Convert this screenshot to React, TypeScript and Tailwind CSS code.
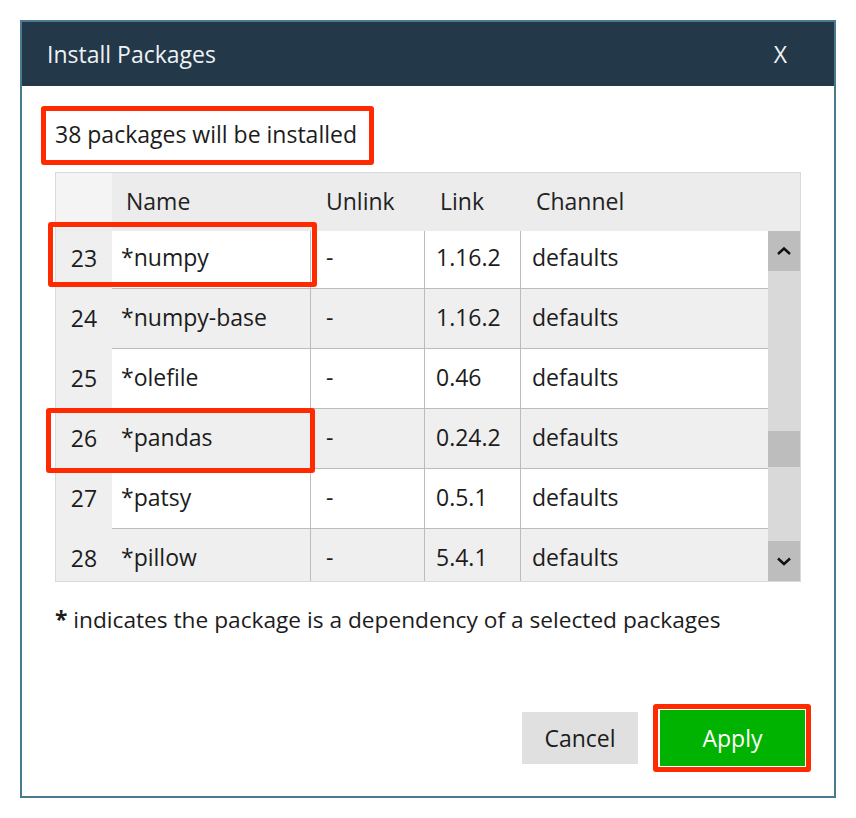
import React from 'react';

interface Pkg {
  num: number;
  name: string;
  unlink: string;
  link: string;
  channel: string;
}

const packages: Pkg[] = [
  { num: 23, name: '*numpy', unlink: '-', link: '1.16.2', channel: 'defaults' },
  { num: 24, name: '*numpy-base', unlink: '-', link: '1.16.2', channel: 'defaults' },
  { num: 25, name: '*olefile', unlink: '-', link: '0.46', channel: 'defaults' },
  { num: 26, name: '*pandas', unlink: '-', link: '0.24.2', channel: 'defaults' },
  { num: 27, name: '*patsy', unlink: '-', link: '0.5.1', channel: 'defaults' },
  { num: 28, name: '*pillow', unlink: '-', link: '5.4.1', channel: 'defaults' },
];

function Chevron({ up }: { up: boolean }) {
  return (
    <svg width="16" height="10" viewBox="0 0 16 10">
      <polyline
        points={up ? '2,8 8,2.5 14,8' : '2,2.5 8,8 14,2.5'}
        fill="none"
        stroke="#111"
        strokeWidth="2.4"
      />
    </svg>
  );
}

export default function App() {
  return (
    <div
      className="relative w-[856px] h-[818px] bg-white pl-[20px] pt-[20px] text-[#1c1c1c]"
      style={{ fontFamily: '"Open Sans", "Noto Sans", sans-serif' }}
    >
      <div className="w-[816px] h-[778px] border-2 border-[#4a7b8c] flex flex-col">
        {/* Title bar */}
        <div className="h-[64px] bg-[#233849] flex items-center justify-between pl-[25px] pr-[47px] text-[#eef2f5] text-[23px]">
          <span>Install Packages</span>
          <span>X</span>
        </div>

        <div className="flex-1 flex flex-col px-[33px]">
          <div className="pt-[30px] h-[86px] text-[23px] leading-[36px]">38 packages will be installed</div>

          {/* Table */}
          <div className="w-[746px] h-[410px] border border-[#d9d9d9] flex flex-col">
            <div className="h-[58px] flex text-[23px] text-[#222] bg-[#ececec] pb-[2px]">
              <div className="w-[56px] bg-[#f4f4f4]" />
              <div className="w-[198px] pl-[14px] flex items-center">Name</div>
              <div className="w-[114px] pl-[16px] flex items-center">Unlink</div>
              <div className="w-[96px] pl-[16px] flex items-center">Link</div>
              <div className="w-[248px] pl-[16px] flex items-center">Channel</div>
            </div>

            <div className="flex-1 flex overflow-hidden">
              <div className="w-[712px] overflow-hidden">
                <div className="-mt-[2px]">
                  {packages.map((p, i) => {
                    const bg = i % 2 === 0 ? 'bg-white' : 'bg-[#efefef]';
                    return (
                      <div key={p.num} className="h-[60px] flex text-[23px]">
                        <div className="w-[56px] bg-[#efefef] flex items-center justify-center pb-[2px]">{p.num}</div>
                        <div className={`w-[198px] ${bg} border-b border-[#bcbcbc] pl-[9px] pb-[2px] flex items-center`}>{p.name}</div>
                        <div className={`w-[114px] ${bg} border-b border-l border-[#bcbcbc] pl-[15px] pb-[2px] flex items-center`}>{p.unlink}</div>
                        <div className={`w-[96px] ${bg} border-b border-l border-[#bcbcbc] pl-[11px] pb-[2px] flex items-center`}>{p.link}</div>
                        <div className={`w-[248px] ${bg} border-b border-l border-[#bcbcbc] pl-[11px] pb-[2px] flex items-center`}>{p.channel}</div>
                      </div>
                    );
                  })}
                </div>
              </div>

              {/* Scrollbar */}
              <div className="w-[32px] bg-[#d9d9d9] flex flex-col">
                <div className="h-[40px] bg-[#bdbdbd] flex items-center justify-center">
                  <Chevron up />
                </div>
                <div className="flex-1 relative">
                  <div className="absolute left-0 right-0 top-[160px] h-[36px] bg-[#bdbdbd]" />
                </div>
                <div className="h-[40px] bg-[#bdbdbd] flex items-center justify-center">
                  <Chevron up={false} />
                </div>
              </div>
            </div>
          </div>

          <div className="mt-[20px] text-[22.7px] leading-[36px]">
            <span className="font-bold">*</span> indicates the package is a dependency of a selected packages
          </div>

          <div className="mt-auto pb-[30px] -mr-[4px] flex justify-end items-center gap-[22px] text-[23px]">
            <button className="w-[116px] h-[52px] bg-[#e0e0e0] text-[#1c1c1c]">Cancel</button>
            <button className="w-[145px] h-[56px] bg-[#00b300] text-white">Apply</button>
          </div>
        </div>
      </div>

      {/* Annotation boxes */}
      <div className="absolute left-[41px] top-[106px] w-[333px] h-[59px] border-[5px] border-[#ff2a00] rounded-[3px]" />
      <div className="absolute left-[48px] top-[222px] w-[269px] h-[65px] border-[5px] border-[#ff2a00] rounded-[3px]" />
      <div className="absolute left-[46px] top-[408px] w-[269px] h-[65px] border-[5px] border-[#ff2a00] rounded-[3px]" />
      <div className="absolute left-[653px] top-[704px] w-[158px] h-[68px] border-[5px] border-[#ff2a00] rounded-[3px]" />
    </div>
  );
}
